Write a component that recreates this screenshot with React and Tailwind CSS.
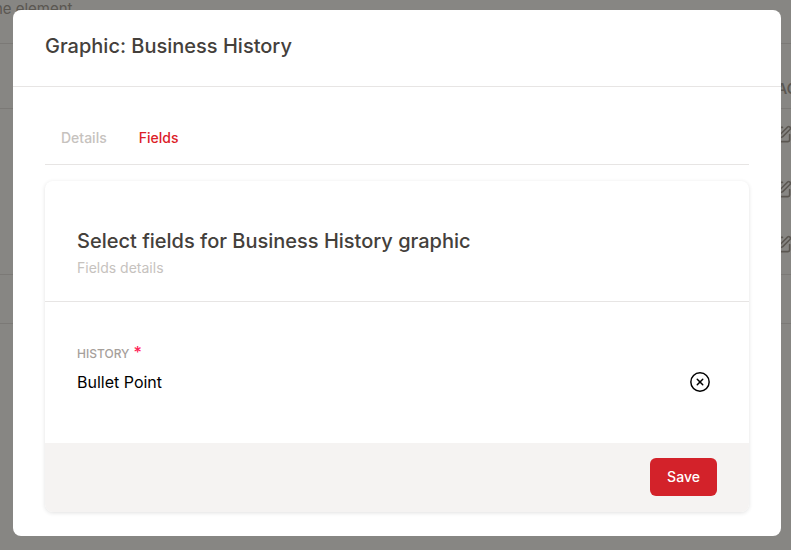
import React from "react";
import { CircleX, SquarePen } from "lucide-react";

const rows = [0, 1, 2];

const App = () => {
  return (
    <div className="relative h-[550px] w-[791px] overflow-hidden bg-white font-['Inter',sans-serif]">
      {/* Page behind the dialog */}
      <div className="w-[800px]">
        <div className="h-[44px] border-b border-stone-200 text-[15px] leading-[18px] text-stone-400">
          <span className="-ml-[11px] inline-block">the element</span>
        </div>
        <div className="flex h-[65px] items-end justify-end border-b border-stone-200 pb-[9px] pr-[5px] text-sm font-semibold text-stone-400">
          <span className="w-[18px] overflow-hidden">AC</span>
        </div>
        {rows.map((row) => (
          <div key={row} className="flex h-[55px] items-start justify-end pr-[8px] pt-[16px] text-stone-400">
            <SquarePen size={19} strokeWidth={2} />
          </div>
        ))}
        <div className="h-[50px] border-y border-stone-200"></div>
      </div>

      {/* Dialog */}
      <div className="absolute inset-0 bg-[#100e08]/50 pl-[13px] pt-[10px]">
        <div className="h-[526px] w-[768px] rounded-lg bg-white">
          <div className="flex h-[77px] items-center border-b border-stone-200 px-8 pb-[4px]">
            <h2 className="text-xl font-medium text-stone-700">Graphic: Business History</h2>
          </div>

          <div className="px-8 pt-[31px]">
            <div className="flex h-[47px] gap-8 border-b border-stone-200 px-4 text-sm font-medium">
              <span className="leading-[40px] text-[#c6c2be]">Details</span>
              <span className="leading-[40px] text-[#dc2028]">Fields</span>
            </div>

            <div className="mt-4 overflow-hidden rounded-lg bg-white shadow-[0_1px_4px_rgba(0,0,0,0.12)]">
              <div className="h-[121px] border-b border-stone-200 px-8 pt-[46px]">
                <h3 className="text-xl leading-7 font-medium text-stone-700">
                  Select fields for Business History graphic
                </h3>
                <p className="mt-[1px] text-sm leading-[24px] text-[#c6c2be]">Fields details</p>
              </div>

              <div className="h-[141px] px-8 pt-[42px]">
                <div className="flex h-5 items-center text-xs font-medium text-stone-400">
                  HISTORY
                  <span className="ml-1 -translate-y-[2px] text-base leading-none text-rose-500">*</span>
                </div>
                <div className="mt-[6px] flex h-[24px] items-center justify-between pr-[6px] text-black">
                  <span className="text-base">Bullet Point</span>
                  <CircleX size={22} strokeWidth={1.6} />
                </div>
              </div>

              <div className="flex h-[69px] justify-end bg-[#f5f3f2] px-8 pt-[15px]">
                <button className="h-[38px] w-[67px] rounded-md bg-[#d3222a] text-sm font-medium text-white">
                  Save
                </button>
              </div>
            </div>
          </div>
        </div>
      </div>
    </div>
  );
};

export default App;
